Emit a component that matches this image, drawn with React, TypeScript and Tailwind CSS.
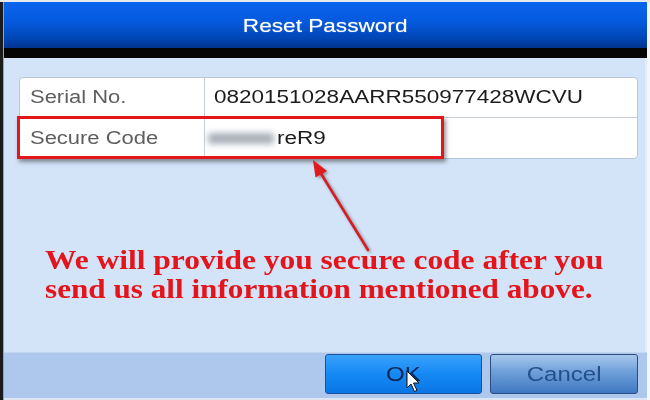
import React from "react";

const sans = { fontFamily: '"Liberation Sans", Arial, sans-serif' };

export default function App() {
  return (
    <div className="relative w-[650px] h-[400px] overflow-hidden bg-[#e9edf2] flex flex-col" style={sans}>
      <div className="h-[2px] bg-[#e6e8ec]" />
      <div className="flex flex-1 min-h-0">
        <div className="w-[3px] bg-[#1b1b1b]" />
        <div className="w-[1px] bg-[#9aa3b0]" />
        <div className="flex-1 flex flex-col min-w-0">
          {/* header */}
          <div className="h-[46px] bg-[linear-gradient(to_bottom,#0a66ee_0%,#0558dc_45%,#0045b4_80%,#00348e_100%)] flex items-center justify-center">
            <span className="inline-block text-white text-[19px] scale-x-[1.19] origin-center mt-[2px] [text-shadow:0_0_1px_rgba(255,255,255,0.6)]">
              Reset Password
            </span>
          </div>
          <div className="h-[10px] bg-[#050505]" />
          {/* body */}
          <div className="flex-1 bg-[#d3e3f8] pt-[19px] pl-[15px] pr-[7px] flex flex-col border-r-[2px] border-[#e4ecf8]">
            <div className="bg-white border border-[#b9c6d6] rounded-[4px] flex flex-col">
              <div className="flex h-[40px] border-b border-[#c9cfd8]">
                <div className="w-[185px] pl-[10px] flex items-center border-r border-[#c9cfd8]">
                  <span className="inline-block text-[18px] text-[#5e5e5e] scale-x-[1.22] origin-left">Serial No.</span>
                </div>
                <div className="flex-1 pl-[9px] flex items-center">
                  <span className="inline-block text-[18px] text-[#1c1c1c] scale-x-[1.25] origin-left">0820151028AARR550977428WCVU</span>
                </div>
              </div>
              <div className="flex h-[40px]">
                <div className="w-[185px] pl-[10px] flex items-center border-r border-[#c9cfd8]">
                  <span className="inline-block text-[18px] text-[#5e5e5e] scale-x-[1.22] origin-left">Secure Code</span>
                </div>
                <div className="flex-1 pl-[3px] flex items-center gap-[3px]">
                  <div className="w-[66px] h-[11px] rounded-[3px] bg-[#a9afb9] blur-[3px]" />
                  <span className="inline-block text-[18px] text-[#1c1c1c] scale-x-[1.25] origin-left">reR9</span>
                </div>
              </div>
            </div>
            <div className="mt-[87px] pl-[26px] text-[#e4141a] font-bold text-[27px] leading-[29px]" style={{ fontFamily: '"Liberation Serif", "Times New Roman", serif' }}>
              <div><span className="inline-block scale-x-[1.165] origin-left">We will provide you secure code after you</span></div>
              <div><span className="inline-block scale-x-[1.155] origin-left">send us all information mentioned above.</span></div>
            </div>
          </div>
          {/* footer */}
          <div className="h-[46px] bg-[#adc8ec] border-t border-[#c2d6f0] flex items-start justify-end gap-[8px] pt-[1px] pr-[9px]">
            <button className="w-[157px] h-[40px] rounded-[3px] border border-[#1d4f96] bg-[linear-gradient(to_bottom,#3aa2fa_0%,#1589f4_50%,#0a76e6_100%)] flex items-center justify-center">
              <span className="inline-block text-[20px] text-[#0b2656] scale-x-[1.2]">OK</span>
            </button>
            <button className="w-[148px] h-[40px] rounded-[3px] border border-[#2b4d7e] bg-[linear-gradient(to_bottom,#a8c8ec_0%,#6e9fd8_45%,#3f79c2_100%)] flex items-center justify-center">
              <span className="inline-block text-[20px] text-[#254f8c] scale-x-[1.2]">Cancel</span>
            </button>
          </div>
          <div className="h-[2px] bg-[#dde7f3]" />
        </div>
        <div className="w-[3px] bg-[#f4f6f9]" />
      </div>

      {/* red highlight box */}
      <div className="absolute left-[17px] top-[116px] w-[427px] h-[43px] border-[3px] border-[#e3161c] shadow-[2px_3px_4px_rgba(60,60,60,0.55)]" />

      {/* arrow + cursor overlay */}
      <svg className="absolute left-0 top-0 pointer-events-none" width="650" height="400" viewBox="0 0 650 400">
        <defs>
          <filter id="sh" x="-20%" y="-20%" width="140%" height="140%">
            <feGaussianBlur stdDeviation="1.5" />
          </filter>
        </defs>
        <g transform="translate(2 2)" opacity="0.45" filter="url(#sh)">
          <line x1="368" y1="250" x2="320" y2="172" stroke="#333" strokeWidth="3" />
          <polygon points="313,160 326.4,170.5 316.2,176.7" fill="#333" />
        </g>
        <line x1="368" y1="250" x2="320" y2="172" stroke="#d61e22" strokeWidth="2.6" strokeLinecap="round" />
        <polygon points="313,160 327,171 315.5,177.5" fill="#e11a1f" />
        <path d="M407 371 L407 388 L411 384 L414.5 391.5 L417 390.5 L413.5 383 L419 383 Z" fill="#ffffff" stroke="#111" strokeWidth="1" strokeLinejoin="round" />
      </svg>
    </div>
  );
}
